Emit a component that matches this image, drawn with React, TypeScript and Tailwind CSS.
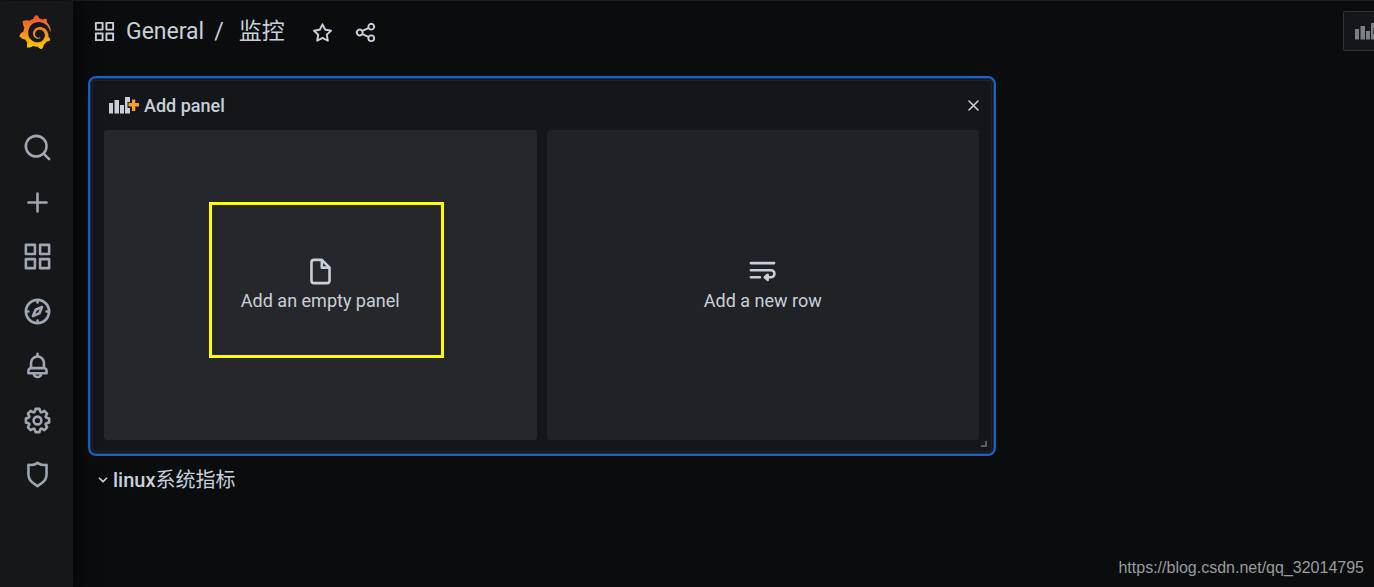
import type { ReactNode } from "react";
import { SiGrafana } from "react-icons/si";

const icons = {
  search:
    "M21.71,20.29,18,16.61A9,9,0,1,0,16.61,18l3.68,3.68a1,1,0,0,0,1.42,0A1,1,0,0,0,21.71,20.29ZM11,18a7,7,0,1,1,7-7A7,7,0,0,1,11,18Z",
  plus: "M19,11H13V5a1,1,0,0,0-2,0v6H5a1,1,0,0,0,0,2h6v6a1,1,0,0,0,2,0V13h6a1,1,0,0,0,0-2Z",
  apps: "M10,13H3a1,1,0,0,0-1,1v7a1,1,0,0,0,1,1h7a1,1,0,0,0,1-1V14A1,1,0,0,0,10,13ZM9,20H4V15H9ZM21,2H14a1,1,0,0,0-1,1v7a1,1,0,0,0,1,1h7a1,1,0,0,0,1-1V3A1,1,0,0,0,21,2ZM20,9H15V4h5Zm1,4H14a1,1,0,0,0-1,1v7a1,1,0,0,0,1,1h7a1,1,0,0,0,1-1V14A1,1,0,0,0,21,13Zm-1,7H15V15h5ZM10,2H3A1,1,0,0,0,2,3v7a1,1,0,0,0,1,1h7a1,1,0,0,0,1-1V3A1,1,0,0,0,10,2ZM9,9H4V4H9Z",
  compass:
    "M12,2A10,10,0,1,0,22,12,10,10,0,0,0,12,2Zm1,17.93V19a1,1,0,0,0-2,0v.93A8,8,0,0,1,4.07,13H5a1,1,0,0,0,0-2H4.07A8,8,0,0,1,11,4.07V5a1,1,0,0,0,2,0V4.07A8,8,0,0,1,19.93,11H19a1,1,0,0,0,0,2h.93A8,8,0,0,1,13,19.93ZM15.14,7.55l-5,2.12a1,1,0,0,0-.52.52l-2.12,5a1,1,0,0,0,.21,1.1,1,1,0,0,0,.7.3.93.93,0,0,0,.4-.09l5-2.12a1,1,0,0,0,.52-.52l2.12-5a1,1,0,0,0-1.31-1.31Zm-2.49,5.1-2.28,1,1-2.28,2.28-1Z",
  bell: "M18,13.18V10a6,6,0,0,0-5-5.91V3a1,1,0,0,0-2,0V4.09A6,6,0,0,0,6,10v3.18A3,3,0,0,0,4,16v2a1,1,0,0,0,1,1H8.14a4,4,0,0,0,7.72,0H19a1,1,0,0,0,1-1V16A3,3,0,0,0,18,13.18ZM8,10a4,4,0,0,1,8,0v3H8Zm4,10a2,2,0,0,1-1.72-1h3.44A2,2,0,0,1,12,20Zm6-3H6V16a1,1,0,0,1,1-1H17a1,1,0,0,1,1,1Z",
  cog: "M21.32,9.55l-1.89-.63.89-1.78A1,1,0,0,0,20.13,6L18,3.87a1,1,0,0,0-1.15-.19l-1.78.89-.63-1.89A1,1,0,0,0,13.5,2h-3a1,1,0,0,0-.95.68L8.92,4.57,7.14,3.68A1,1,0,0,0,6,3.87L3.87,6a1,1,0,0,0-.19,1.15l.89,1.78-1.89.63A1,1,0,0,0,2,10.5v3a1,1,0,0,0,.68.95l1.89.63-.89,1.78A1,1,0,0,0,3.87,18L6,20.13a1,1,0,0,0,1.15.19l1.78-.89.63,1.89a1,1,0,0,0,.95.68h3a1,1,0,0,0,.95-.68l.63-1.89,1.78.89A1,1,0,0,0,18,20.13L20.13,18a1,1,0,0,0,.19-1.15l-.89-1.78,1.89-.63A1,1,0,0,0,22,13.5v-3A1,1,0,0,0,21.32,9.55ZM20,12.78l-1.2.4A2,2,0,0,0,17.64,16l.57,1.14-1.1,1.1L16,17.64a2,2,0,0,0-2.79,1.16l-.4,1.2H11.22l-.4-1.2A2,2,0,0,0,8,17.64l-1.14.57-1.1-1.1L6.36,16A2,2,0,0,0,5.2,13.18L4,12.78V11.22l1.2-.4A2,2,0,0,0,6.36,8L5.79,6.89l1.1-1.1L8,6.36A2,2,0,0,0,10.82,5.2l.4-1.2h1.56l.4,1.2A2,2,0,0,0,16,6.36l1.14-.57,1.1,1.1L17.64,8a2,2,0,0,0,1.16,2.79l1.2.4ZM12,8a4,4,0,1,0,4,4A4,4,0,0,0,12,8Zm0,6a2,2,0,1,1,2-2A2,2,0,0,1,12,14Z",
  shield:
    "M19.63,3.65a1,1,0,0,0-.84-.2,8,8,0,0,1-6.22-1.27,1,1,0,0,0-1.14,0A8,8,0,0,1,5.21,3.45a1,1,0,0,0-.84.2A1,1,0,0,0,4,4.43v7.45a9,9,0,0,0,3.77,7.33l3.65,2.6a1,1,0,0,0,1.16,0l3.65-2.6A9,9,0,0,0,20,11.88V4.43A1,1,0,0,0,19.63,3.65ZM18,11.88a7,7,0,0,1-2.93,5.7L12,19.77,8.93,17.58A7,7,0,0,1,6,11.88V5.58a10,10,0,0,0,6-1.39,10,10,0,0,0,6,1.39Z",
  star: "M22,9.67A1,1,0,0,0,21.14,9l-5.69-.83L12.9,3a1,1,0,0,0-1.8,0L8.55,8.16,2.86,9a1,1,0,0,0-.81.68,1,1,0,0,0,.25,1l4.13,4-1,5.68A1,1,0,0,0,6.9,21.44L12,18.77l5.1,2.67a.93.93,0,0,0,.46.12,1,1,0,0,0,.59-.19,1,1,0,0,0,.4-1l-1-5.68,4.13-4A1,1,0,0,0,22,9.67Zm-6.15,4a1,1,0,0,0-.29.88l.72,4.2-3.76-2a1.06,1.06,0,0,0-.94,0l-3.76,2,.72-4.2a1,1,0,0,0-.29-.88l-3-3,4.21-.61a1,1,0,0,0,.76-.55L12,5.7l1.88,3.82a1,1,0,0,0,.76.55l4.21.61Z",
  share:
    "M18,14a4,4,0,0,0-3.08,1.48l-5.1-2.35a3.64,3.64,0,0,0,0-2.26l5.1-2.35A4,4,0,1,0,14,6a4.17,4.17,0,0,0,.07.71L8.79,9.14a4,4,0,1,0,0,5.72l5.28,2.43A4.17,4.17,0,0,0,14,18a4,4,0,1,0,4-4ZM18,4a2,2,0,1,1-2,2A2,2,0,0,1,18,4ZM6,14a2,2,0,1,1,2-2A2,2,0,0,1,6,14Zm12,6a2,2,0,1,1,2-2A2,2,0,0,1,18,20Z",
  file: "M20,8.94a1.31,1.31,0,0,0-.06-.27l0-.09a1.07,1.07,0,0,0-.19-.28h0l-6-6h0a1.07,1.07,0,0,0-.28-.19l-.1,0A1.1,1.1,0,0,0,13.06,2H7A3,3,0,0,0,4,5V19a3,3,0,0,0,3,3H17a3,3,0,0,0,3-3V9S20,9,20,8.94ZM14,5.41,16.59,8H14ZM18,19a1,1,0,0,1-1,1H7a1,1,0,0,1-1-1V5A1,1,0,0,1,7,4h5V9a1,1,0,0,0,1,1h5Z",
  angleDown:
    "M17,9.17a1,1,0,0,0-1.41,0L12,12.71,8.46,9.17a1,1,0,0,0-1.41,0,1,1,0,0,0,0,1.42l4.24,4.24a1,1,0,0,0,1.42,0L17,10.59A1,1,0,0,0,17,9.17Z",
};

type IconName = keyof typeof icons;

const Icon = ({ name, className }: { name: IconName; className: string }) => (
  <svg viewBox="0 0 24 24" fill="currentColor" className={className} aria-hidden="true">
    <path d={icons[name]} />
  </svg>
);

const WrapIcon = () => (
  <svg
    viewBox="0 0 24 24"
    fill="none"
    stroke="currentColor"
    strokeWidth="2"
    strokeLinecap="round"
    strokeLinejoin="round"
    className="size-[31px]"
    aria-hidden="true"
  >
    <path d="M3 5.500h18M3 11h15.500a2.700 2.700 0 0 1 0 5.500H15M3 16.500h7" />
    <path d="M16 14.500l-2.200 2 2.200 2z" fill="currentColor" />
  </svg>
);

const AddPanelIcon = ({ plusColor }: { plusColor: string }) => (
  <svg width="30" height="17" viewBox="0 0 30 17" className="shrink-0" aria-hidden="true">
    <g fill="currentColor">
      <path d="M0 6h4v10.500H0zM5.500 3h4.500v13.500H5.500zM11 8h4v8.500h-4z" />
      <path d="M16 0h5v5h-2.500v6H21v5.500h-5z" />
    </g>
    <path d="M23 2.500h3.300V6H30v3.500h-3.700v4.500H23V9.500h-3.500V6H23z" fill={plusColor} />
  </svg>
);

const navItems: { icon: IconName; label: string }[] = [
  { icon: "search", label: "Search" },
  { icon: "plus", label: "Create" },
  { icon: "apps", label: "Dashboards" },
  { icon: "compass", label: "Explore" },
  { icon: "bell", label: "Alerting" },
  { icon: "cog", label: "Configuration" },
  { icon: "shield", label: "Server Admin" },
];

const Sidebar = () => (
  <nav className="z-10 flex w-[73px] shrink-0 flex-col items-center bg-[#161719] pt-[14px] shadow-[0_0_20px_#000]">
    <a href="#home" aria-label="Home" className="pr-[3px]">
      <svg width="0" height="0" className="absolute" aria-hidden="true">
        <linearGradient id="flame" x1="0" y1="0" x2="0" y2="1">
          <stop offset="0.1" stopColor="#f05a28" />
          <stop offset="1" stopColor="#fbca0a" />
        </linearGradient>
      </svg>
      <SiGrafana className="size-[34px]" fill="url(#flame)" />
    </a>
    <ul className="mt-[83px] flex h-[358px] flex-col justify-between pl-px text-[#9fa7b3]">
      {navItems.map((item) => (
        <li key={item.icon}>
          <a href={`#${item.icon}`} aria-label={item.label}>
            <Icon name={item.icon} className="size-[31px]" />
          </a>
        </li>
      ))}
    </ul>
  </nav>
);

const Header = () => (
  <header className="flex h-[60px] items-center pl-[5px]">
    <Icon name="apps" className="size-[23px]" />
    <h1 className="ml-[10px] flex items-center pt-[2px] text-[23px] leading-7">
      <a href="#general">General</a>
      <span className="mx-[10px]">/</span>
      <a href="#dashboard" className="ml-[5px]">
        监控
      </a>
    </h1>
    <div className="ml-[26px] flex gap-5 pt-[2px]">
      <button aria-label="Mark as favorite">
        <Icon name="star" className="size-[23px]" />
      </button>
      <button aria-label="Share dashboard">
        <Icon name="share" className="size-[23px]" />
      </button>
    </div>
    <button
      className="ml-auto flex h-10 w-[31px] items-center overflow-hidden rounded-l-xs border border-r-0 border-[#2c3235] bg-[#141619] pl-[11px] text-[#7b8087]"
      aria-label="Add panel"
    >
      <AddPanelIcon plusColor="#7b8087" />
    </button>
  </header>
);

const Tile = ({ icon, label, className }: { icon: ReactNode; label: string; className: string }) => (
  <button
    className={`flex flex-1 flex-col items-center justify-center rounded-[3px] text-lg leading-7 ${className}`}
  >
    {icon}
    <span>{label}</span>
  </button>
);

const AddPanel = () => (
  <section className="w-full max-w-[908px] rounded-lg border-2 border-[#1f60c4] bg-[#141619] p-[2px] shadow-[inset_0_0_0_1px_#16315f]">
    <div className="relative rounded-[3px] border border-[#202226] pr-[12px] pb-[11px] pl-[11px]">
      <div className="flex h-[49px] items-center pl-[5px]">
        <AddPanelIcon plusColor="#f9a02c" />
        <h2 className="ml-[5px] text-lg leading-6 font-medium">Add panel</h2>
        <button className="ml-auto" aria-label="Close">
          <svg width="11" height="11" viewBox="0 0 11 11" stroke="currentColor" strokeWidth="1.600" strokeLinecap="round">
            <path d="M1 1l9 9M10 1l-9 9" />
          </svg>
        </button>
      </div>
      <div className="relative flex h-[310px] gap-[10px]">
        <Tile
          icon={<Icon name="file" className="size-[31px]" />}
          label="Add an empty panel"
          className="bg-[#26272b]"
        />
        <Tile icon={<WrapIcon />} label="Add a new row" className="bg-[#202226]" />
        {/* highlight */}
        <div className="pointer-events-none absolute top-[72px] left-[105px] h-[156px] w-[235px] border-3 border-[#ffff00]" />
      </div>
      <div className="absolute right-1 bottom-1 size-[6px] border-r-2 border-b-2 border-[#5a5c60]" />
    </div>
  </section>
);

const App = () => {
  return (
    <div className="flex min-h-screen border-t border-[#1c1d20] bg-[#0b0c0e] font-[Roboto,'Noto_Sans_CJK_SC',sans-serif] text-[#c7d0d9]">
      <Sidebar />
      <main className="flex min-w-0 flex-1 flex-col pl-[15px]">
        <Header />
        <div className="mt-[15px]">
          <AddPanel />
          <button className="mt-[10px] flex items-center pl-[5px] text-xl leading-7">
            <Icon name="angleDown" className="size-5" />
            <span className="font-medium">linux</span>
            <span>系统指标</span>
          </button>
        </div>
        <footer className="mt-auto self-end pr-[10px] pb-[7px] font-['Liberation_Sans',sans-serif] text-base leading-6 text-[#9a9b9c]">
          https://blog.csdn.net/qq_32014795
        </footer>
      </main>
    </div>
  );
};

export default App;
